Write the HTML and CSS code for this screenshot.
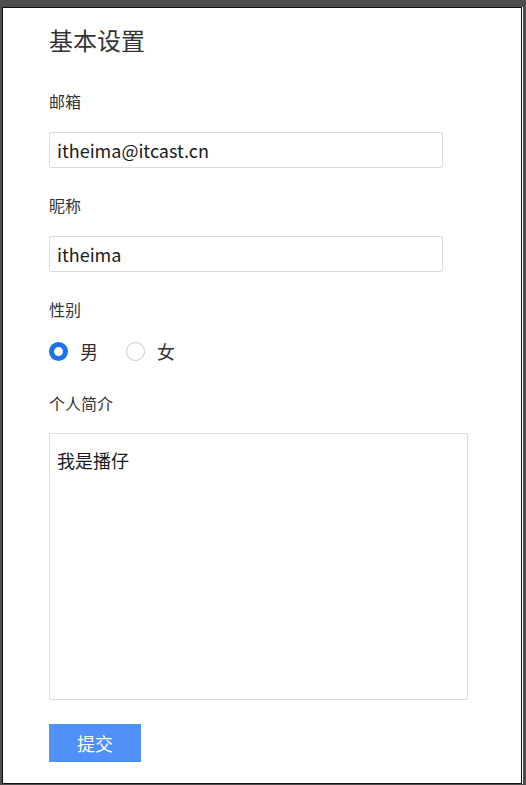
FILE: index.html
```html
<!DOCTYPE html>
<html lang="zh-CN">
<head>
<meta charset="utf-8">
<title>基本设置</title>
<link rel="stylesheet" href="styles.css">
</head>
<body>
<div class="frame">
  <form class="settings">
    <h1 class="title">基本设置</h1>
    <div class="label label-first">邮箱</div>
    <input class="field" type="text" value="itheima@itcast.cn">
    <div class="label">昵称</div>
    <input class="field" type="text" value="itheima">
    <div class="label">性别</div>
    <div class="radios">
      <label class="radio"><input type="radio" name="sex" checked><span>男</span></label>
      <label class="radio"><input type="radio" name="sex"><span>女</span></label>
    </div>
    <div class="label label-intro">个人简介</div>
    <textarea class="intro">我是播仔</textarea>
    <button class="submit" type="button">提交</button>
  </form>
</div>
</body>
</html>
```

FILE: styles.css
```css
html, body {
  margin: 0;
  padding: 0;
  height: 100%;
}
body {
  background: #4e4e4e;
  font-family: "Noto Sans CJK SC", "Noto Sans", sans-serif;
  color: #333;
}
.frame {
  margin: 7px 4px 0 2px;
  height: 775px;
  border: 1px solid #111;
  background: #fff;
  box-shadow: 1px 0 0 #fff;
  box-sizing: content-box;
}
.settings {
  display: flex;
  flex-direction: column;
  align-items: flex-start;
  padding: 14px 0 0 46px;
}
.title {
  margin: 0;
  font-size: 24px;
  font-weight: normal;
  line-height: 36px;
  color: #333;
}
.label {
  font-size: 16px;
  line-height: 24px;
  margin-top: 25px;
  color: #333;
}
.label-first {
  margin-top: 31px;
}
.label-intro {
  margin-top: 28px;
}
.field {
  margin-top: 19px;
  width: 394px;
  height: 36px;
  box-sizing: border-box;
  border: 1px solid #dcdcdc;
  border-radius: 2px;
  padding: 0 7px;
  font-family: "Noto Sans CJK SC", "Noto Sans", sans-serif;
  font-size: 18px;
  color: #1a1a1a;
  outline: none;
}
.radios {
  margin-top: 18px;
  display: flex;
  align-items: center;
  height: 24px;
}
.radio {
  display: flex;
  align-items: center;
  font-size: 18px;
  color: #333;
  margin-right: 28px;
}
.radio input {
  appearance: none;
  -webkit-appearance: none;
  margin: 0 12px 0 0;
  width: 19px;
  height: 19px;
  border-radius: 50%;
  border: 1px solid #c8c8c8;
  box-sizing: border-box;
  background: #fff;
}
.radio input:checked {
  border: 5px solid #1a73f0;
}
.intro {
  margin-top: 18px;
  width: 419px;
  height: 267px;
  box-sizing: border-box;
  border: 1px solid #dcdcdc;
  border-radius: 2px;
  padding: 13px 7px;
  font-family: "Noto Sans CJK SC", "Noto Sans", sans-serif;
  font-size: 18px;
  line-height: 26px;
  color: #1a1a1a;
  resize: none;
  outline: none;
}
.submit {
  margin-top: 24px;
  width: 92px;
  height: 38px;
  border: none;
  background: #4f91f7;
  color: #fff;
  font-family: "Noto Sans CJK SC", "Noto Sans", sans-serif;
  font-size: 18px;
  padding: 0;
}
```
